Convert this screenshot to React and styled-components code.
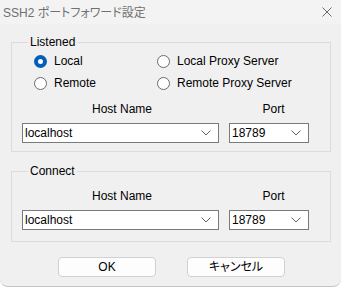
import React, { useState } from 'react';
import styled, { createGlobalStyle } from 'styled-components';

const GlobalStyle = createGlobalStyle`
  body {
    margin: 0;
    background: #ffffff;
    font-family: 'Liberation Sans', 'Noto Sans CJK JP', sans-serif;
  }
`;

const Window = styled.div`
  width: 341px;
  height: 287px;
  box-sizing: border-box;
  background: #f0f0f0;
  border-bottom: 1px solid #c4c4c4;
  border-radius: 0 0 8px 8px;
  font-size: 12px;
  color: #000;
  overflow: hidden;
`;

const TitleBar = styled.div`
  height: 23px;
  display: flex;
  align-items: center;
  justify-content: space-between;
  padding: 0 9px 1px 3px;
  background: #f3f3f3;
`;

const Title = styled.span`
  font-feature-settings: 'palt';
  font-size: 12px;
  color: #707070;
`;

const Body = styled.div`
  padding: 11px 10px 0 11px;
`;

const Group = styled.fieldset`
  margin: 0 0 ${p => p.$gap || 0}px;
  padding: ${p => p.$top}px 0 ${p => p.$bottom}px 10px;
  border: 1px solid #dcdcdc;
  min-width: 0;
`;

const Legend = styled.legend`
  margin-left: 6px;
  padding: 0 2px;
  line-height: 14px;
  font-size: 12px;
`;

const RadioGrid = styled.div`
  display: grid;
  grid-template-columns: 123px 1fr;
  grid-auto-rows: 22px;
  padding-left: 12px;
`;

const RadioLabel = styled.label`
  display: flex;
  align-items: center;
  gap: 7px;
  cursor: pointer;
`;

const RadioDot = styled.span`
  width: 13px;
  height: 13px;
  box-sizing: border-box;
  border-radius: 50%;
  border: ${p => (p.$on ? '4px solid #005fb8' : '1px solid #6b6b6b')};
  background: #fff;
`;

const FieldGrid = styled.div`
  display: grid;
  grid-template-columns: 197px 80px;
  column-gap: 10px;
  row-gap: 7px;
  margin-top: ${p => p.$mt || 0}px;
`;

const Header = styled.div`
  text-align: center;
  line-height: 14px;
  padding-left: ${p => p.$shift || 0}px;
`;

const Combo = styled.div`
  height: 20px;
  box-sizing: border-box;
  border: 1px solid #7a7a7a;
  background: #fff;
  display: flex;
  align-items: center;
  justify-content: space-between;
  padding: 0 7px 0 2px;
`;

const ButtonRow = styled.div`
  display: flex;
  justify-content: center;
  gap: 31px;
  padding: 15px 0 0 1px;
`;

const Button = styled.button`
  width: 98px;
  height: 20px;
  box-sizing: border-box;
  background: #fdfdfd;
  border: 1px solid #d0d0d0;
  border-radius: 4px;
  font-family: 'Liberation Sans', 'Noto Sans CJK JP', sans-serif;
  font-feature-settings: 'palt';
  font-size: 12px;
  color: #000;
  padding: 0;
  line-height: 18px;
`;

const Chevron = () => (
  <svg width="10" height="6" viewBox="0 0 10 6">
    <path d="M0.5 0.5 L5 5 L9.5 0.5" fill="none" stroke="#606060" strokeWidth="1" />
  </svg>
);

const CloseIcon = () => (
  <svg width="10" height="10" viewBox="0 0 10 10">
    <path d="M0.5 0.5 L9.5 9.5 M9.5 0.5 L0.5 9.5" stroke="#6a6a6a" strokeWidth="1" />
  </svg>
);

const Fields = ({ host, port, mt }) => (
  <FieldGrid $mt={mt}>
    <Header $shift={3}>Host Name</Header>
    <Header $shift={9}>Port</Header>
    <Combo>
      <span>{host}</span>
      <Chevron />
    </Combo>
    <Combo>
      <span>{port}</span>
      <Chevron />
    </Combo>
  </FieldGrid>
);

const modes = ['Local', 'Local Proxy Server', 'Remote', 'Remote Proxy Server'];

const App = () => {
  const [mode, setMode] = useState('Local');

  return (
    <Window>
      <GlobalStyle />
      <TitleBar>
        <Title>SSH2 ポートフォワード設定</Title>
        <CloseIcon />
      </TitleBar>
      <Body>
        <Group $top={1} $bottom={8} $gap={12}>
          <Legend>Listened</Legend>
          <RadioGrid>
            {modes.map(m => (
              <RadioLabel key={m} onClick={() => setMode(m)}>
                <RadioDot $on={mode === m} />
                {m}
              </RadioLabel>
            ))}
          </RadioGrid>
          <Fields host="localhost" port="18789" mt={8} />
        </Group>
        <Group $top={11} $bottom={11}>
          <Legend>Connect</Legend>
          <Fields host="localhost" port="18789" />
        </Group>
        <ButtonRow>
          <Button>OK</Button>
          <Button>キャンセル</Button>
        </ButtonRow>
      </Body>
    </Window>
  );
};

export default App;
